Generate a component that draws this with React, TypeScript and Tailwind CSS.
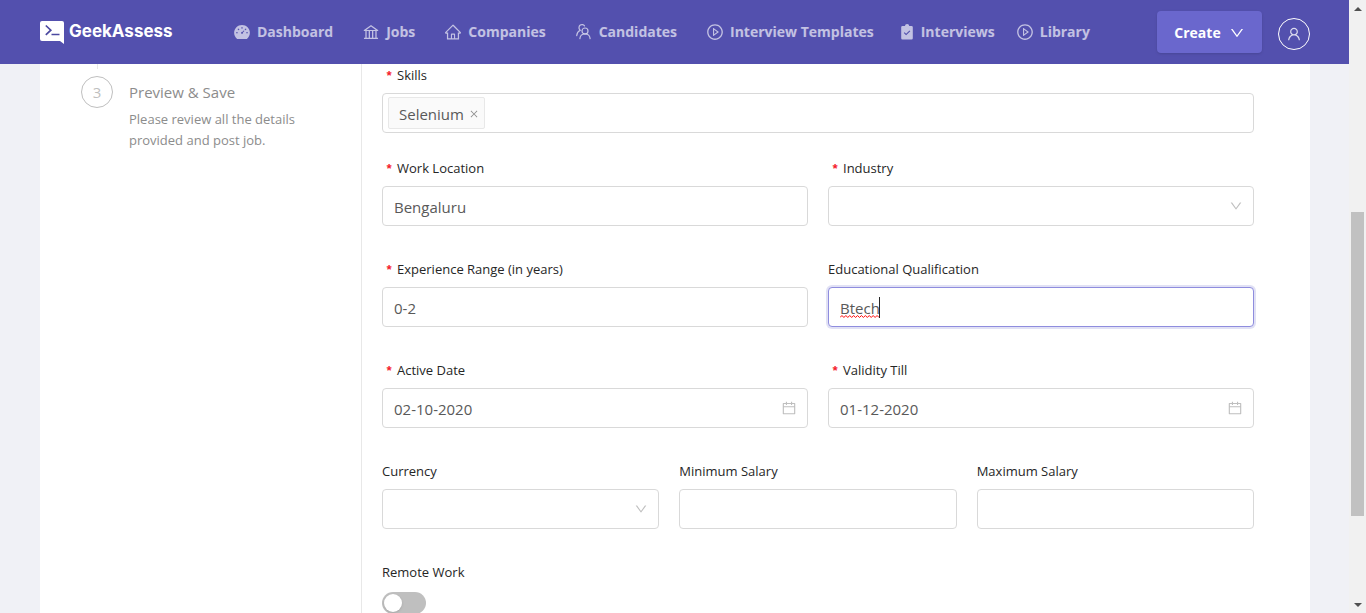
import { useState } from "react";
import type { ReactNode } from "react";
import {
  AiFillDashboard,
  AiOutlineBank,
  AiOutlineCalendar,
  AiOutlineClose,
  AiOutlineDown,
  AiOutlineHome,
  AiOutlinePlayCircle,
  AiOutlineUser,
} from "react-icons/ai";

const fieldBox =
  "h-10 w-full rounded border border-[#d9d9d9] bg-white px-[11px] pt-0.5 text-[15px] text-[#595959] outline-none";

function CandidatesIcon() {
  return (
    <svg
      viewBox="-1 -1 18 18"
      className="size-[18px]"
      fill="none"
      stroke="currentColor"
      strokeWidth="1.2"
      strokeLinecap="round"
      aria-hidden="true"
    >
      <circle cx="9" cy="7" r="3" />
      <path d="M3.900 14.600c.2-2.800 2.200-4.600 5.100-4.600s4.900 1.800 5.100 4.600" />
      <path d="M8.500 1.900A2.900 2.900 0 1 0 3.500 5.300c.2.400.4.700.7.900C2.100 7.200.9 9 .7 11.600" />
    </svg>
  );
}

function InterviewsIcon() {
  return (
    <svg viewBox="0 0 14 18" className="h-[18px] w-[14px]" fill="currentColor" aria-hidden="true">
      <path
        fillRule="evenodd"
        d="M1.500 3H4a2.100 2.100 0 0 1 4.200 0h2.300a1.300 1.300 0 0 1 1.300 1.300v10.900a1.300 1.300 0 0 1-1.300 1.300h-9A1.300 1.300 0 0 1 .2 15.200V4.300A1.300 1.300 0 0 1 1.500 3zM3.600 9.300l-.8.8 2.300 2.200 4.200-4.100-.8-.8-3.400 3.400z"
      />
    </svg>
  );
}

function LogoMark() {
  return (
    <svg viewBox="0 0 24 23" className="h-[23px] w-6" aria-hidden="true">
      <path d="M2 0h20a2 2 0 0 1 2 2v21l-4-3H2a2 2 0 0 1-2-2V2a2 2 0 0 1 2-2z" fill="#fff" />
      <path d="M5.800 4.500l5 4.700-5 4.600" fill="none" stroke="#4b49a0" strokeWidth="1.700" />
      <path d="M11.500 13.500h8" stroke="#4b49a0" strokeWidth="1.500" />
    </svg>
  );
}

type NavEntry = { label: string; icon: ReactNode };

const primaryNav: NavEntry[] = [
  { label: "Dashboard", icon: <AiFillDashboard className="size-[18px]" /> },
  { label: "Jobs", icon: <AiOutlineBank className="size-[18px]" /> },
  { label: "Companies", icon: <AiOutlineHome className="size-[18px]" /> },
  { label: "Candidates", icon: <CandidatesIcon /> },
  { label: "Interview Templates", icon: <AiOutlinePlayCircle className="size-[18px]" /> },
];

const secondaryNav: NavEntry[] = [
  { label: "Interviews", icon: <InterviewsIcon /> },
  { label: "Library", icon: <AiOutlinePlayCircle className="size-[18px]" /> },
];

function NavLink({ label, icon }: NavEntry) {
  return (
    <a href="#nav" className="flex items-center gap-1.5">
      {icon}
      {label}
    </a>
  );
}

function Header() {
  return (
    <header className="flex h-16 shrink-0 items-center bg-[#5350ae] pr-[39px] pl-10">
      <a href="#home" className="flex w-[193px] shrink-0 items-center gap-[5px] text-white">
        <LogoMark />
        <span className="font-['Inter'] text-[17px] font-bold">GeekAssess</span>
      </a>
      <nav className="flex items-center gap-[27px] text-sm font-bold whitespace-nowrap text-white/65">
        <div className="flex items-center gap-[29px]">
          {primaryNav.map((item) => (
            <NavLink key={item.label} {...item} />
          ))}
        </div>
        <div className="flex items-center gap-[21px]">
          {secondaryNav.map((item) => (
            <NavLink key={item.label} {...item} />
          ))}
        </div>
      </nav>
      <div className="ml-auto flex items-end gap-4">
        <button className="flex h-[42px] w-[105px] items-center justify-center gap-2 rounded bg-[#6a67cd] pt-0.5 text-sm font-bold text-white shadow-sm">
          Create
          <AiOutlineDown className="size-4" />
        </button>
        <button
          aria-label="Account"
          className="mb-[3px] flex size-8 items-center justify-center rounded-full border border-white text-white/80"
        >
          <AiOutlineUser className="size-4" />
        </button>
      </div>
    </header>
  );
}

function Field({
  id,
  label,
  required,
  children,
}: {
  id: string;
  label: string;
  required?: boolean;
  children: ReactNode;
}) {
  return (
    <div className="flex min-w-0 flex-1 flex-col gap-[7px]">
      <label htmlFor={id} className="flex h-[22px] gap-1 text-[13px] leading-[22px] text-[#262626]">
        {required && (
          <span className="w-[11px] pt-0.5 text-right font-['Liberation_Mono'] font-bold text-[#f5222d]">
            *
          </span>
        )}
        {label}
      </label>
      {children}
    </div>
  );
}

function TextField({ id, value = "" }: { id: string; value?: string }) {
  return <input id={id} type="text" defaultValue={value} className={fieldBox} />;
}

function SelectField({ id }: { id: string }) {
  return (
    <div className="relative">
      <select id={id} className={`${fieldBox} appearance-none`}>
        <option></option>
      </select>
      <AiOutlineDown className="pointer-events-none absolute top-[13px] right-[11px] size-[14px] text-[#bfbfbf]" />
    </div>
  );
}

function DateField({ id, value }: { id: string; value: string }) {
  return (
    <div className="relative">
      <input id={id} type="text" defaultValue={value} className={fieldBox} />
      <AiOutlineCalendar className="pointer-events-none absolute top-3 right-[11px] size-4 text-[#bfbfbf]" />
    </div>
  );
}

function QualificationField({ id }: { id: string }) {
  const [value, setValue] = useState("Btech");
  return (
    <div className="relative">
      <input
        id={id}
        type="text"
        value={value}
        onChange={(e) => setValue(e.target.value)}
        className="h-10 w-full rounded border border-[#8f8dde] bg-white px-[11px] pt-0.5 text-[15px] text-[#595959] ring-2 ring-[#6a67cd]/20 outline-none"
      />
      {value === "Btech" && (
        <span className="pointer-events-none absolute top-[10px] left-3 flex h-[21px] w-10 items-end border-r border-[#262626]">
          <svg className="h-[3px] w-full" viewBox="0 0 40 3" fill="none" stroke="#f00" aria-hidden="true">
            <path d="M0 2.500l2-2 2 2 2-2 2 2 2-2 2 2 2-2 2 2 2-2 2 2 2-2 2 2 2-2 2 2 2-2 2 2 2-2 2 2 2-2 2 2" />
          </svg>
        </span>
      )}
    </div>
  );
}

function Steps() {
  return (
    <aside className="w-[322px] shrink-0 border-r border-[#e8e8e8] pl-[41px]">
      <div className="flex gap-4">
        <div className="flex w-8 flex-col items-center gap-[7px]">
          <span className="h-[5px] w-px bg-[#e8e8e8]" />
          <span className="flex size-8 shrink-0 items-center justify-center rounded-full border border-[#bfbfbf] text-[15px] text-[#bfbfbf]">
            3
          </span>
        </div>
        <div className="flex w-[180px] flex-col gap-px pt-3 text-[#8c8c8c]">
          <h2 className="text-[15px] leading-8">Preview &amp; Save</h2>
          <p className="text-[13px] leading-[21px]">
            Please review all the details provided and post job.
          </p>
        </div>
      </div>
    </aside>
  );
}

function JobForm() {
  return (
    <form className="flex min-w-0 flex-1 flex-col gap-8 pr-14 pl-5">
      <div className="flex flex-col gap-6">
        <Field id="skills" label="Skills" required>
          <div className="flex h-10 items-center rounded border border-[#d9d9d9] px-[5px]">
            <span className="flex h-8 shrink-0 items-center gap-[5px] rounded-xs border border-[#e8e8e8] bg-[#fafafa] pt-0.5 pr-[5px] pl-[10px] text-[15px] text-[#595959]">
              Selenium
              <button type="button" aria-label="Remove Selenium" className="text-[#8c8c8c]">
                <AiOutlineClose className="size-[10px]" />
              </button>
            </span>
            <input id="skills" type="text" className="h-8 min-w-0 flex-1 px-2 text-[15px] outline-none" />
          </div>
        </Field>
        <div className="flex gap-5">
          <Field id="location" label="Work Location" required>
            <TextField id="location" value="Bengaluru" />
          </Field>
          <Field id="industry" label="Industry" required>
            <SelectField id="industry" />
          </Field>
        </div>
      </div>
      <div className="flex gap-5">
        <Field id="experience" label="Experience Range (in years)" required>
          <TextField id="experience" value="0-2" />
        </Field>
        <Field id="qualification" label="Educational Qualification">
          <QualificationField id="qualification" />
        </Field>
      </div>
      <div className="flex gap-5">
        <Field id="active" label="Active Date" required>
          <DateField id="active" value="02-10-2020" />
        </Field>
        <Field id="validity" label="Validity Till" required>
          <DateField id="validity" value="01-12-2020" />
        </Field>
      </div>
      <div className="flex gap-5">
        <Field id="currency" label="Currency">
          <SelectField id="currency" />
        </Field>
        <Field id="min-salary" label="Minimum Salary">
          <TextField id="min-salary" />
        </Field>
        <Field id="max-salary" label="Maximum Salary">
          <TextField id="max-salary" />
        </Field>
      </div>
      <Field id="remote" label="Remote Work">
        <input
          id="remote"
          type="checkbox"
          role="switch"
          className="mt-0.5 flex h-[22px] w-11 appearance-none items-center rounded-full bg-[#bfbfbf] px-0.5 before:size-[18px] before:rounded-full before:bg-white before:shadow-sm checked:justify-end checked:bg-[#6a67cd]"
        />
      </Field>
    </form>
  );
}

function ScrollRail() {
  return (
    <div className="flex w-[17px] shrink-0 flex-col items-center bg-[#f1f1f1]" aria-hidden="true">
      <span className="flex h-[17px] items-center">
        <svg viewBox="0 0 8 4" className="h-1 w-2" fill="#505050">
          <path d="M4 0l4 4H0z" />
        </svg>
      </span>
      <span className="grow-[195]" />
      <span className="w-[13px] grow-[304] bg-[#c1c1c1]" />
      <span className="grow-[80]" />
      <span className="flex h-[17px] items-center">
        <svg viewBox="0 0 8 4" className="h-1 w-2" fill="#505050">
          <path d="M0 0h8L4 4z" />
        </svg>
      </span>
    </div>
  );
}

export default function App() {
  return (
    <div className="flex h-screen overflow-hidden font-['Open_Sans','Noto_Sans',sans-serif]">
      <div className="flex min-w-0 flex-1 flex-col bg-[#f0f1f6]">
        <Header />
        <main className="mr-[39px] ml-10 flex min-h-0 flex-1 overflow-hidden bg-white">
          <Steps />
          <JobForm />
        </main>
      </div>
      <ScrollRail />
    </div>
  );
}
